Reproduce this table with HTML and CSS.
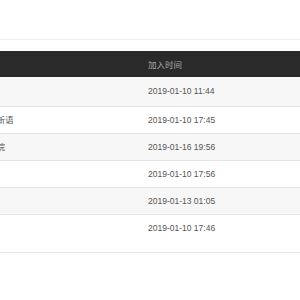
FILE: index.html
```html
<!DOCTYPE html>
<html>
<head>
<meta charset="utf-8">
<link rel="stylesheet" href="styles.css">
</head>
<body>
<div class="top"></div>
<div class="clip">
  <table class="list">
    <colgroup><col class="c-name"><col class="c-time"></colgroup>
    <thead>
      <tr><th class="name">名称</th><th class="time">加入时间</th></tr>
    </thead>
    <tbody>
      <tr><td class="name">某某文化传播有限公司</td><td class="time">2019-01-10 11:44</td></tr>
      <tr><td class="name">北京市某某区第一中学高中部新语</td><td class="time">2019-01-10 17:45</td></tr>
      <tr><td class="name">某某省某某市某区第一人民医院</td><td class="time">2019-01-16 19:56</td></tr>
      <tr><td class="name">某某科技有限公司</td><td class="time">2019-01-10 17:56</td></tr>
      <tr><td class="name">某某教育培训中心</td><td class="time">2019-01-13 01:05</td></tr>
      <tr><td class="name">某某信息技术<br>分公司</td><td class="time">2019-01-10 17:46</td></tr>
    </tbody>
  </table>
</div>
</body>
</html>
```

FILE: styles.css
```css
html, body {
  margin: 0;
  padding: 0;
  background: #fff;
}
body {
  font-family: "Liberation Sans", "Noto Sans CJK SC", sans-serif;
  font-size: 8.5px;
  color: #555;
}
.top {
  height: 39px;
  border-bottom: 1px solid #eeeeee;
  margin-bottom: 11px;
}
.clip {
  overflow: hidden;
  width: 100%;
}
.list {
  border-collapse: collapse;
  margin-left: -120px;
  width: calc(100% + 120px);
  table-layout: fixed;
}
.c-name { width: 260px; }
.list .cell-base, .list th, .list td {
  text-align: left;
  white-space: nowrap;
  overflow: hidden;
}
.list thead tr {
  background: #2a2a2a;
}
.list thead th {
  height: 26px;
  font-weight: normal;
  color: #a9a9a9;
  padding: 0 0 0 8px;
}
.list thead th.name { color: transparent; padding-left: 6px; }
.list tbody td {
  height: 27px;
  border-top: 1px solid #e4e4e4;
  vertical-align: top;
  padding: 8px 0 0 8px;
  box-sizing: border-box;
  line-height: 11px;
  color: #555;
}
.list tbody td.name { padding-left: 6px; }
.list tbody tr:first-child td { border-top: 0; height: 29px; padding-top: 9px; }
.list tbody tr:nth-child(odd) { background: #f7f7f7; }
.list tbody tr:last-child td {
  height: 38px;
  border-bottom: 1px solid #e4e4e4;
}
```
